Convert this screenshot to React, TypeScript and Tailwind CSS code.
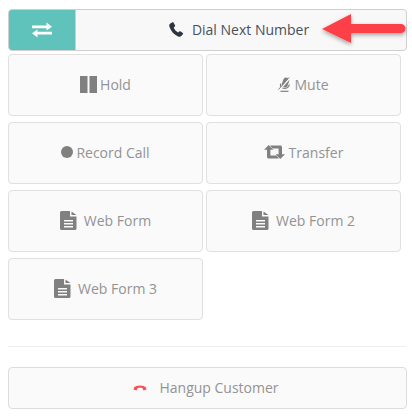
import React from "react";

const FileIcon = () => (
  <svg width="17" height="19" viewBox="0 0 17 19" className="shrink-0">
    <path d="M1.500 0H10v5.500h6.500V17.500a1.500 1.500 0 0 1-1.500 1.500H1.500A1.500 1.500 0 0 1 0 17.500V1.500A1.500 1.500 0 0 1 1.500 0Z" fill="#808080" />
    <path d="M11.500 0.500 16.500 4h-5Z" fill="#808080" />
    <rect x="4" y="9" width="9" height="1.500" fill="#fafafa" />
    <rect x="4" y="12" width="9" height="1.500" fill="#fafafa" />
    <rect x="4" y="15" width="9" height="1.500" fill="#fafafa" />
  </svg>
);

const Btn = ({ children, gap = "gap-[3px]" }: { children: React.ReactNode; gap?: string }) => (
  <button className={`h-[62px] pb-[2px] rounded border border-[#e0e0e0] bg-[#fafafa] flex items-center justify-center ${gap} text-[14px] text-[#939393]`}>
    {children}
  </button>
);

export default function App() {
  return (
    <div className="relative w-[412px] h-[420px] bg-white pt-[9px] pl-2 overflow-hidden" style={{ fontFamily: '"Open Sans", sans-serif' }}>
      <div className="flex w-[399px] h-[42px] rounded border border-[#cfcfcf] bg-[#f8f8f8] overflow-hidden">
        <div className="w-[67px] bg-[#5fc2bb] border-r border-[#cfcfcf] flex items-center justify-center pb-[1px]">
          <svg width="20" height="16" viewBox="0 0 20 16">
            <path d="M0 3.500h14.500V0.500L20 4.800 14.500 8.500V6.300H0Z" fill="#fff" />
            <path d="M20 9.700H5.500V7.500L0 11.200 5.500 15.500V12.500H20Z" fill="#fff" />
          </svg>
        </div>
        <div className="flex-1 flex items-center justify-center gap-[8px] text-[14px] text-[#4a505c] pb-[1px] pr-[4px]">
          <svg width="15" height="15" viewBox="0 0 15 15">
            <path d="M3.400.3 1 1.800C.3 2.400 0 3.400.5 5c1.600 4.500 4.500 7.600 8.600 9.400 1.400.5 2.500.3 3.200-.3l1.700-2c.3-.4.2-.9-.2-1.200l-2.500-1.600c-.4-.2-.8-.2-1.100.1l-1 1.100c-2.100-1-3.700-2.900-4.500-5l1.200-.9c.3-.3.4-.7.2-1.100L4.500.6C4.200.2 3.800.1 3.400.3Z" fill="#2f3540" />
          </svg>
          <span>Dial Next Number</span>
        </div>
      </div>

      <div className="mt-[3px] grid grid-cols-[195px_195px] gap-x-[3px] gap-y-[6px]">
        <Btn>
          <svg width="17" height="17" viewBox="0 0 17 17">
            <rect x="0" y="0" width="7.500" height="17" fill="#808080" />
            <rect x="9.500" y="0" width="7.500" height="17" fill="#808080" />
          </svg>
          <span>Hold</span>
        </Btn>
        <Btn>
          <svg width="13" height="15" viewBox="0 0 13 15">
            <rect x="4.500" y="0.500" width="6" height="10" rx="3" transform="rotate(20 7.500 5.500)" fill="#808080" />
            <path d="M2.500 6.500C2 9 3.500 11.500 6.500 11.500S10.500 10 11.500 7.500" stroke="#808080" strokeWidth="1.100" fill="none" />
            <path d="M1 13.500 12 1" stroke="#fafafa" strokeWidth="1.400" />
            <path d="M0.500 12.500 11 0.500" stroke="#808080" strokeWidth="1" />
            <path d="M2.500 14.300h8" stroke="#808080" strokeWidth="1.200" />
          </svg>
          <span>Mute</span>
        </Btn>
        <Btn>
          <div className="w-3 h-3 rounded-full bg-[#808080]" />
          <span>Record Call</span>
        </Btn>
        <Btn gap="gap-[4px]">
          <svg width="21" height="14" viewBox="0 0 21 14">
            <path d="M4.700 0 9.400 4.700H6.400V10.500H12.500L15 13.500H4.700C3.800 13.500 3 12.800 3 11.800V4.700H0Z" fill="#808080" />
            <path d="M16.300 14 11.600 9.300H14.600V3.500H8.500L6 0.500H16.300C17.200 0.500 18 1.200 18 2.200V9.300H21Z" fill="#808080" />
          </svg>
          <span>Transfer</span>
        </Btn>
        <Btn gap="gap-[7px]">
          <FileIcon />
          <span>Web Form</span>
        </Btn>
        <Btn gap="gap-[7px]">
          <FileIcon />
          <span>Web Form 2</span>
        </Btn>
        <Btn gap="gap-[7px]">
          <FileIcon />
          <span>Web Form 3</span>
        </Btn>
      </div>

      <div className="mt-[26px] w-[398px] border-t border-[#eeeeee]" />

      <button className="mt-5 w-[399px] h-[42px] pb-[2px] pr-[3px] rounded border border-[#dddddd] bg-[#fafafa] flex items-center justify-center gap-[12px] text-[14px] text-[#939393]">
        <svg width="14" height="7" viewBox="0 0 14 7">
          <path d="M.5 5.500 1 3.500C3 .8 11 .8 13 3.500L13.500 5.500 10.500 6.500 9.500 4.200C8 3.600 6 3.600 4.500 4.200L3.500 6.500Z" fill="#fb4f55" />
        </svg>
        <span>Hangup Customer</span>
      </button>

      <svg className="absolute left-[320px] top-[10px]" width="90" height="40" viewBox="0 0 90 40">
        <defs>
          <filter id="s" x="-20%" y="-30%" width="140%" height="170%">
            <feDropShadow dx="0" dy="2" stdDeviation="2" floodColor="#000" floodOpacity="0.35" />
          </filter>
        </defs>
        <path d="M2 19 31 4V14H81A4.500 4.500 0 0 1 81 23H31V33Z" fill="#fd4146" filter="url(#s)" />
      </svg>
    </div>
  );
}
